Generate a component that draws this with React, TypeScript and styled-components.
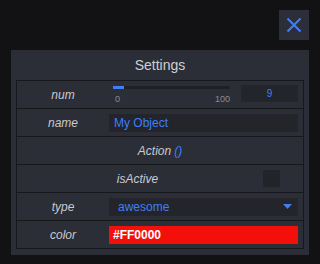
import React, { useState } from "react";
import styled, { createGlobalStyle } from "styled-components";

/* ─────────────── Global ─────────────── */
const GlobalStyle = createGlobalStyle`
  html, body {
    margin: 0;
    padding: 0;
    background: #121214;
    font-family: "Liberation Sans", Arial, sans-serif;
  }
`;

const BLUE = "#3f7ef7";
const BORDER = "#17181c";
const FIELD = "#23252b";

/* ─────────────── Styled Components ─────────────── */
const Page = styled.div`
  width: 320px;
  height: 264px;
  display: flex;
  flex-direction: column;
  padding: 10px 11px 0 11px;
  box-sizing: border-box;
`;

const TopBar = styled.div`
  display: flex;
  justify-content: flex-end;
`;

const CloseButton = styled.button`
  width: 30px;
  height: 30px;
  padding: 0;
  border: none;
  background: #2c2f38;
  display: flex;
  align-items: center;
  justify-content: center;
  cursor: pointer;
`;

const Panel = styled.div`
  margin-top: 10px;
  background: #2b2e37;
  padding: 0 5px 6px 5px;
`;

const Title = styled.div`
  height: 30px;
  display: flex;
  align-items: center;
  justify-content: center;
  font-size: 14px;
  color: #cfd0d4;
`;

const Table = styled.div`
  border: 1px solid ${BORDER};
  border-bottom: none;
  display: flex;
  flex-direction: column;
`;

const Row = styled.div`
  height: 27px;
  border-bottom: 1px solid ${BORDER};
  display: flex;
  align-items: center;
`;

const Label = styled.div<{ wide?: boolean }>`
  width: ${({ wide }) => (wide ? "auto" : "92px")};
  flex: ${({ wide }) => (wide ? "1" : "none")};
  text-align: center;
  font-size: 12px;
  font-style: italic;
  color: #c9cacf;
`;

const Value = styled.div`
  flex: 1;
  display: flex;
  align-items: center;
  padding-right: 5px;
  min-width: 0;
`;

const Field = styled.div<{ bg?: string; color?: string; bold?: boolean }>`
  flex: 1;
  height: 18px;
  display: flex;
  align-items: center;
  padding-left: ${({ bold }) => (bold ? "4px" : "5px")};
  background: ${({ bg }) => bg || FIELD};
  color: ${({ color }) => color || BLUE};
  font-size: 12px;
  font-weight: ${({ bold }) => (bold ? "bold" : "normal")};
`;

const SliderBox = styled.div`
  width: 117px;
  margin-left: 4px;
  display: flex;
  flex-direction: column;
`;

const Track = styled.div`
  height: 3px;
  background: #1e2025;
  margin-top: 1px;
`;

const Fill = styled.div`
  height: 100%;
  background: ${BLUE};
`;

const Ticks = styled.div`
  display: flex;
  justify-content: space-between;
  font-size: 9px;
  color: #8a8c92;
  margin-top: 5px;
  padding-left: 2px;
`;

const NumBox = styled.div`
  width: 57px;
  height: 17px;
  margin-left: 11px;
  margin-top: -3px;
  background: ${FIELD};
  display: flex;
  align-items: center;
  justify-content: center;
  color: ${BLUE};
  font-size: 10px;
`;

const ActionText = styled.div`
  flex: 1;
  text-align: center;
  font-size: 12px;
  font-style: italic;
  color: #c9cacf;
`;

const Parens = styled.span`
  color: ${BLUE};
  margin-left: 3px;
`;

const Checkbox = styled.div`
  width: 17px;
  height: 17px;
  background: #22242a;
  margin: 0 23px 0 5px;
`;

const Select = styled(Field)`
  justify-content: space-between;
  padding-left: 9px;
  padding-right: 6px;
`;

/* ─────────────── Component ─────────────── */
const App: React.FC = () => {
  const [num] = useState(9);
  const pct = (num / 100) * 100;

  return (
    <>
      <GlobalStyle />
      <Page>
        <TopBar>
          <CloseButton aria-label="close">
            <svg width="16" height="16" viewBox="0 0 16 16">
              <path d="M1.5 1.5 L14.5 14.5 M14.5 1.5 L1.5 14.5" stroke={BLUE} strokeWidth="2" />
            </svg>
          </CloseButton>
        </TopBar>
        <Panel>
          <Title>Settings</Title>
          <Table>
            <Row>
              <Label>num</Label>
              <Value>
                <SliderBox>
                  <Track>
                    <Fill style={{ width: `${pct}%` }} />
                  </Track>
                  <Ticks>
                    <span>0</span>
                    <span>100</span>
                  </Ticks>
                </SliderBox>
                <NumBox>{num}</NumBox>
              </Value>
            </Row>
            <Row>
              <Label>name</Label>
              <Value>
                <Field>My Object</Field>
              </Value>
            </Row>
            <Row>
              <ActionText>
                Action<Parens>()</Parens>
              </ActionText>
            </Row>
            <Row>
              <Label wide>isActive</Label>
              <Checkbox />
            </Row>
            <Row>
              <Label>type</Label>
              <Value>
                <Select>
                  <span>awesome</span>
                  <svg width="9" height="5" viewBox="0 0 9 5">
                    <path d="M0 0 H9 L4.5 5 Z" fill={BLUE} />
                  </svg>
                </Select>
              </Value>
            </Row>
            <Row>
              <Label>color</Label>
              <Value>
                <Field bg="#f50f0a" color="#ffffff" bold>#FF0000</Field>
              </Value>
            </Row>
          </Table>
        </Panel>
      </Page>
    </>
  );
};

export default App;
